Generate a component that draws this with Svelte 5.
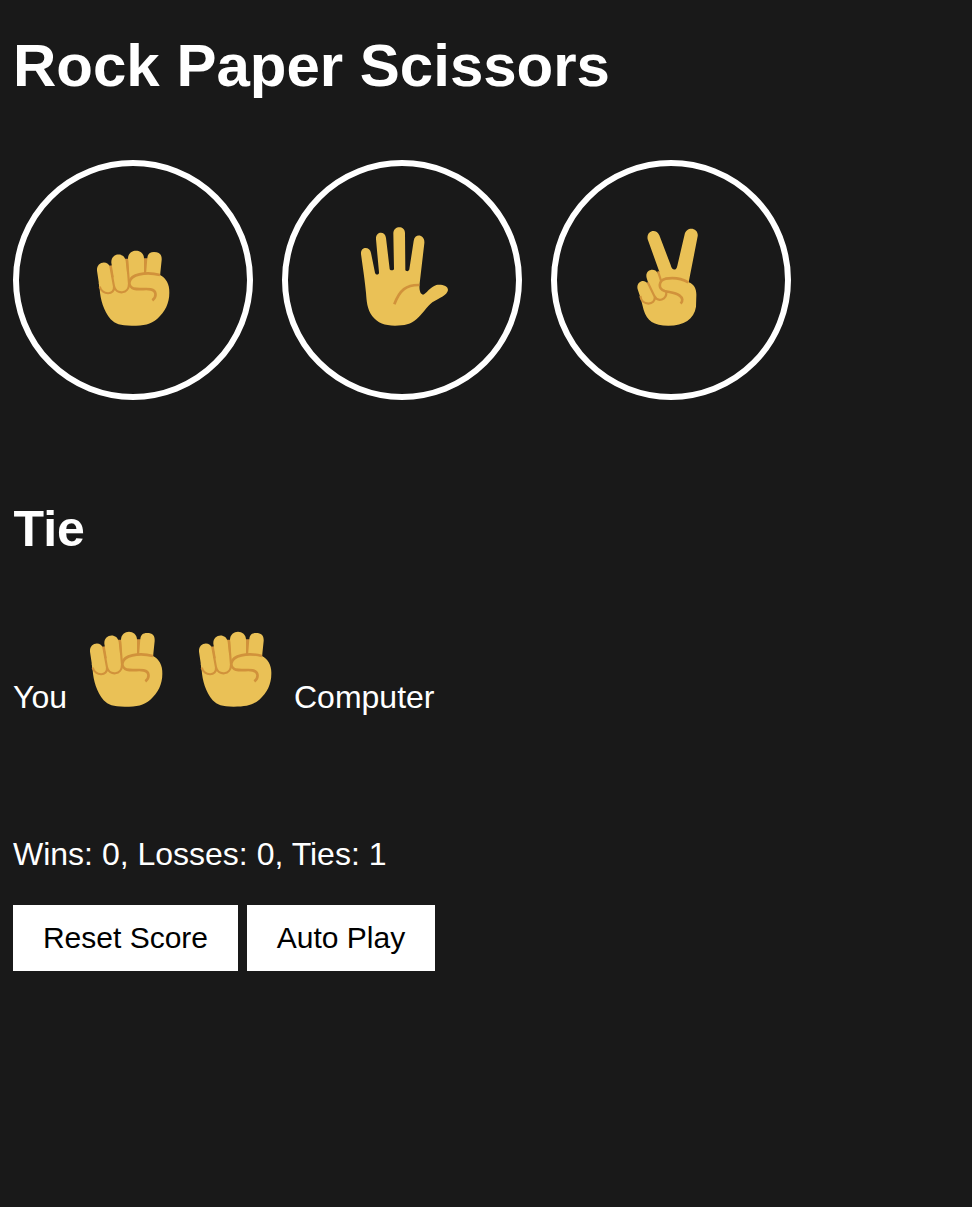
<script>
  const moves = ['rock', 'paper', 'scissors'];
  let player = $state('rock');
  let computer = $state('rock');
  let result = $state('Tie');
  let score = $state({ wins: 0, losses: 0, ties: 1 });
  let timer = $state(null);

  function pick() {
    return moves[Math.floor(Math.random() * 3)];
  }

  function play(move) {
    player = move;
    computer = pick();
    const diff = (moves.indexOf(player) - moves.indexOf(computer) + 3) % 3;
    if (diff === 0) {
      result = 'Tie';
      score.ties += 1;
    } else if (diff === 1) {
      result = 'You win';
      score.wins += 1;
    } else {
      result = 'You lose';
      score.losses += 1;
    }
  }

  function reset() {
    score = { wins: 0, losses: 0, ties: 0 };
  }

  function autoPlay() {
    if (timer) {
      clearInterval(timer);
      timer = null;
    } else {
      timer = setInterval(() => play(pick()), 1000);
    }
  }
</script>

{#snippet hand(move)}
  {#if move === 'rock'}
    <svg class="hand" viewBox="-36 -60 360 360" aria-hidden="true">
      <path class="crease" d="M66 78 L84 76 L112 56 L135 56 L165 55 L196 55 L200 110 L90 130Z" />
      <path class="skin" d="M41 128 L90 110 L135 100 L225 105 C243 114 254 133 253 158 C253 190 240 215 217 236 C196 253 178 257 140 257 C105 257 91 252 77 238 C56 213 46 178 44 148Z" />
      <path class="skin" d="M36 92 C34 62 71 60 75 82 L85 133 C90 162 50 166 43 139Z" />
      <path class="skin" d="M79 68 C78 37 119 36 122 63 L130 131 C134 161 94 163 90 133Z" />
      <path class="skin" d="M129 56 C129 24 177 24 177 56 L177 104 L134 125Z" />
      <path class="skin" d="M187 55 C188 42 194 36 207 36 C224 36 231 44 230 60 L225 108 L183 104Z" />
      <path class="line" d="M44 140 C52 167 90 166 87 139 L76 78 M87 139 C94 165 132 163 132 131 L126 57" />
      <path class="line thick" d="M225 105 C203 99 180 99 163 103 C127 111 126 139 147 146 C163 150 182 145 197 148 C216 152 215 172 202 181" />
    </svg>
  {:else if move === 'paper'}
    <svg class="hand" viewBox="-24 0 360 360" aria-hidden="true">
      <path class="skin" d="M33 102 C31 79 60 79 63 99 L75 158 C77 166 88 165 87 157 L78 58 C76 33 106 32 108 54 L119 147 C120 153 132 152 132 146 L130 39 C131 16 165 16 165 39 L166 149 C167 155 177 155 178 148 L191 63 C194 38 226 43 223 70 L209 190 C207 209 210 223 219 224 C227 223 241 200 259 195 C276 193 294 197 294 210 C292 226 269 233 247 247 C231 260 215 285 200 297 C183 313 163 317 135 317 C104 317 83 309 67 289 C51 267 50 243 48 219 C45 184 38 140 33 102Z" />
      <path class="line thick" d="M133 253 C149 210 169 194 208 195" />
    </svg>
  {:else}
    <svg class="hand" viewBox="-42 0 360 360" aria-hidden="true">
      <path class="skin" d="M68 58 C63 30 95 24 103 46 L137 135 C141 153 154 153 157 137 L179 43 C184 17 222 22 218 49 L191 187 C209 193 215 209 214 228 L213 260 C207 298 177 317 130 317 C86 317 66 303 56 270 L47 235 L38 208 C32 186 57 174 68 191 L70 190 L65 174 C58 149 90 141 98 160 L103 155Z" />
      <path class="line" d="M99 154 L108 182" />
      <path class="line" d="M46 228 C50 259 93 257 89 230 L68 187 M88 228 C98 247 126 241 124 214" />
      <path class="line thick" d="M190 187 C169 175 144 172 122 176 C99 182 99 207 119 213 C134 217 151 217 163 226 C174 234 174 243 167 251" />
    </svg>
  {/if}
{/snippet}

<main>
  <h1>Rock Paper Scissors</h1>

  <div class="moves">
    {#each moves as move}
      <button class="move" aria-label={move} onclick={() => play(move)}>
        {@render hand(move)}
      </button>
    {/each}
  </div>

  <h2>{result}</h2>

  <div class="picks">
    <span>You</span>
    {@render hand(player)}
    {@render hand(computer)}
    <span class="rival">Computer</span>
  </div>

  <p class="score">Wins: {score.wins}, Losses: {score.losses}, Ties: {score.ties}</p>

  <div class="actions">
    <button class="action" onclick={reset}>Reset Score</button>
    <button class="action auto" onclick={autoPlay}>Auto Play</button>
  </div>
</main>

<style>
  :global(body) {
    margin: 0;
    background: #191919;
  }
  main {
    display: flex;
    flex-direction: column;
    box-sizing: border-box;
    min-height: 1207px;
    padding: 31px 13px 0;
    color: #fff;
    font-family: Arial, 'Liberation Sans', sans-serif;
    font-size: 32px;
    line-height: 36px;
  }
  h1 {
    margin: 0;
    font-size: 60px;
    line-height: 70px;
  }
  .moves {
    display: flex;
    gap: 29px;
    margin-top: 59px;
  }
  .move {
    display: flex;
    align-items: center;
    justify-content: center;
    box-sizing: border-box;
    width: 240px;
    height: 240px;
    padding: 0;
    border: 6px solid #fff;
    border-radius: 50%;
    background: transparent;
    cursor: pointer;
  }
  .hand {
    display: block;
    flex: none;
    width: 120px;
    height: 120px;
  }
  .skin {
    fill: #eac156;
  }
  .crease {
    fill: #d1923b;
  }
  .line {
    fill: none;
    stroke: #d1923b;
    stroke-width: 6.5;
    stroke-linecap: butt;
    stroke-linejoin: round;
  }
  .thick {
    stroke-width: 8;
  }
  h2 {
    margin: 101px 0 0 0.5px;
    font-size: 50px;
    line-height: 56px;
  }
  .picks {
    display: flex;
    align-items: flex-end;
    height: 120px;
    margin-top: 44px;
  }
  .picks span {
    width: 53px;
    margin-bottom: 6px;
  }
  .picks .hand + .hand {
    margin-left: -11px;
  }
  .picks .rival {
    width: auto;
    margin-left: -1px;
  }
  .score {
    margin: 115px 0 0;
  }
  .actions {
    display: flex;
    gap: 9px;
    margin-top: 33px;
  }
  .action {
    width: 225px;
    height: 66px;
    padding: 0;
    border: none;
    background: #fff;
    color: #000;
    font-family: inherit;
    font-size: 30px;
    cursor: pointer;
  }
  .auto {
    width: 188px;
  }
</style>
